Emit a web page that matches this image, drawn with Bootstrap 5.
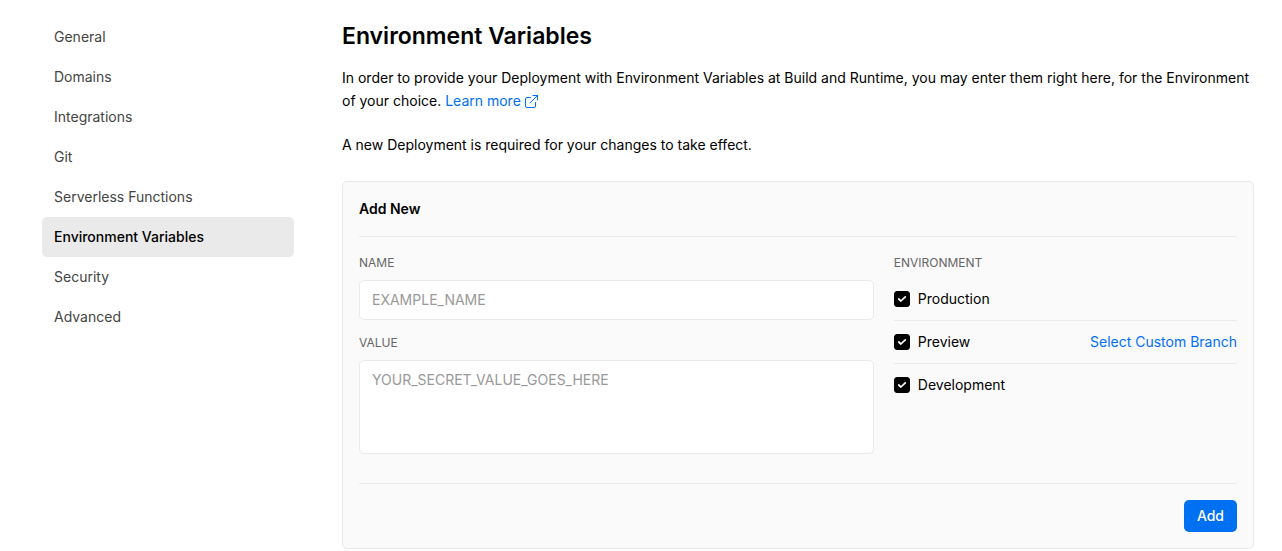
<!DOCTYPE html>
<html lang="en">
<head>
<meta charset="utf-8">
<meta name="viewport" content="width=device-width, initial-scale=1">
<title>Environment Variables</title>
<link href="https://cdn.jsdelivr.net/npm/bootstrap@5.3.0/dist/css/bootstrap.min.css" rel="stylesheet">
<style>
  body { font-family: Inter, "Liberation Sans", sans-serif; font-size: 14px; line-height: 24px; color: #000; background: #fff; }
  a { color: #0070f3; text-decoration: none; }
  .settings-page { display: grid; grid-template-columns: 252px minmax(0, 1fr); column-gap: 48px; padding: 17px 28px 0 42px; }
  .settings-nav .nav-link { color: #444; padding: 8px 12px; border-radius: 5px; }
  .settings-nav .nav-link.active { color: #000; background: #eaeaea; font-weight: 500; }
  h1 { font-size: 23px; line-height: 38px; font-weight: 600; margin: 0 0 11px; }
  .intro { line-height: 23px; margin-bottom: 21px; }
  .external-icon { width: 13px; height: 13px; vertical-align: -2px; }
  .panel { background: #fafafa; border: 1px solid #eaeaea; border-radius: 5px; padding: 0 16px; margin-top: 25px; }
  .panel h2 { font-size: 14px; line-height: 24px; font-weight: 600; margin: 0; padding: 15px 0; border-bottom: 1px solid #eaeaea; }
  .panel-fields { display: grid; grid-template-columns: minmax(0, 3fr) minmax(0, 2fr); column-gap: 20px; padding: 17px 0 29px; }
  .field-title { display: block; font-size: 12px; line-height: 18px; color: #666; margin: 0 0 8px; float: none; }
  .env-title { margin-bottom: 6px; }
  .panel .form-control { font-size: 14px; line-height: 24px; padding: 7px 12px; border-color: #eaeaea; border-radius: 5px; color: #000; resize: none; }
  .form-control::placeholder { color: #999; opacity: 1; }
  .name-box { margin-bottom: 14px; }
  .value-box { height: 94px; }
  .env-row { height: 43px; border-bottom: 1px solid #eaeaea; }
  .env-row:last-child { border-bottom-color: transparent; }
  .env-row .form-check-input { width: 16px; height: 16px; margin: 0; border-radius: 3px; float: none; }
  .env-row .form-check-input:checked { background-color: #000; border-color: #000; background-origin: border-box; background-image: url("data:image/svg+xml,%3Csvg xmlns='http://www.w3.org/2000/svg' viewBox='0 0 16 16'%3E%3Cpath d='M4.7 8 6.9 10 11.3 5.8' fill='none' stroke='%23fff' stroke-width='1.7' stroke-linecap='round' stroke-linejoin='round'/%3E%3C/svg%3E"); }
  .panel-footer { border-top: 1px solid #eaeaea; padding: 16px 0; }
  .btn-add { --bs-btn-bg: #0070f3; --bs-btn-color: #fff; --bs-btn-hover-bg: #0060d0; --bs-btn-hover-color: #fff; font-size: 14px; line-height: 24px; font-weight: 500; padding: 4px 13px; border: 0; border-radius: 5px; }
</style>
</head>
<body>
<div class="settings-page">
  <nav class="settings-nav nav flex-column" aria-label="Settings">
    <a class="nav-link" href="#">General</a>
    <a class="nav-link" href="#">Domains</a>
    <a class="nav-link" href="#">Integrations</a>
    <a class="nav-link" href="#">Git</a>
    <a class="nav-link" href="#">Serverless Functions</a>
    <a class="nav-link active" aria-current="page" href="#">Environment Variables</a>
    <a class="nav-link" href="#">Security</a>
    <a class="nav-link" href="#">Advanced</a>
  </nav>
  <main>
    <h1>Environment Variables</h1>
    <p class="intro">In order to provide your Deployment with Environment Variables at Build and Runtime, you may enter them right here, for the Environment <span>of your choice.</span> <a href="#">Learn more<svg class="external-icon ms-1" viewBox="0 0 13 13" fill="none" stroke="currentColor" stroke-linecap="round" stroke-linejoin="round" aria-hidden="true"><path d="M10.500 7.500V11a1.500 1.500 0 0 1-1.500 1.500H2A1.500 1.500 0 0 1 .5 11V4A1.500 1.500 0 0 1 2 2.500h3.500M8 .5h4.500V5M5 8 12.500.5"/></svg></a></p>
    <p class="intro">A new Deployment is required for your changes to take effect.</p>
    <form class="panel">
      <h2>Add New</h2>
      <div class="panel-fields">
        <div>
          <label class="field-title" for="name">NAME</label>
          <input class="form-control name-box" id="name" type="text" placeholder="EXAMPLE_NAME">
          <label class="field-title" for="value">VALUE</label>
          <textarea class="form-control value-box" id="value" placeholder="YOUR_SECRET_VALUE_GOES_HERE"></textarea>
        </div>
        <fieldset>
          <legend class="field-title env-title">ENVIRONMENT</legend>
          <div class="env-row d-flex align-items-center gap-2">
            <input class="form-check-input" type="checkbox" id="production" checked><label for="production">Production</label>
          </div>
          <div class="env-row d-flex align-items-center gap-2">
            <input class="form-check-input" type="checkbox" id="preview" checked><label for="preview">Preview</label>
            <a class="ms-auto" href="#">Select Custom Branch</a>
          </div>
          <div class="env-row d-flex align-items-center gap-2">
            <input class="form-check-input" type="checkbox" id="development" checked><label for="development">Development</label>
          </div>
        </fieldset>
      </div>
      <div class="panel-footer d-flex justify-content-end">
        <button class="btn btn-add" type="button">Add</button>
      </div>
    </form>
  </main>
</div>
<script src="https://cdn.jsdelivr.net/npm/bootstrap@5.3.0/dist/js/bootstrap.bundle.min.js"></script>
</body>
</html>
